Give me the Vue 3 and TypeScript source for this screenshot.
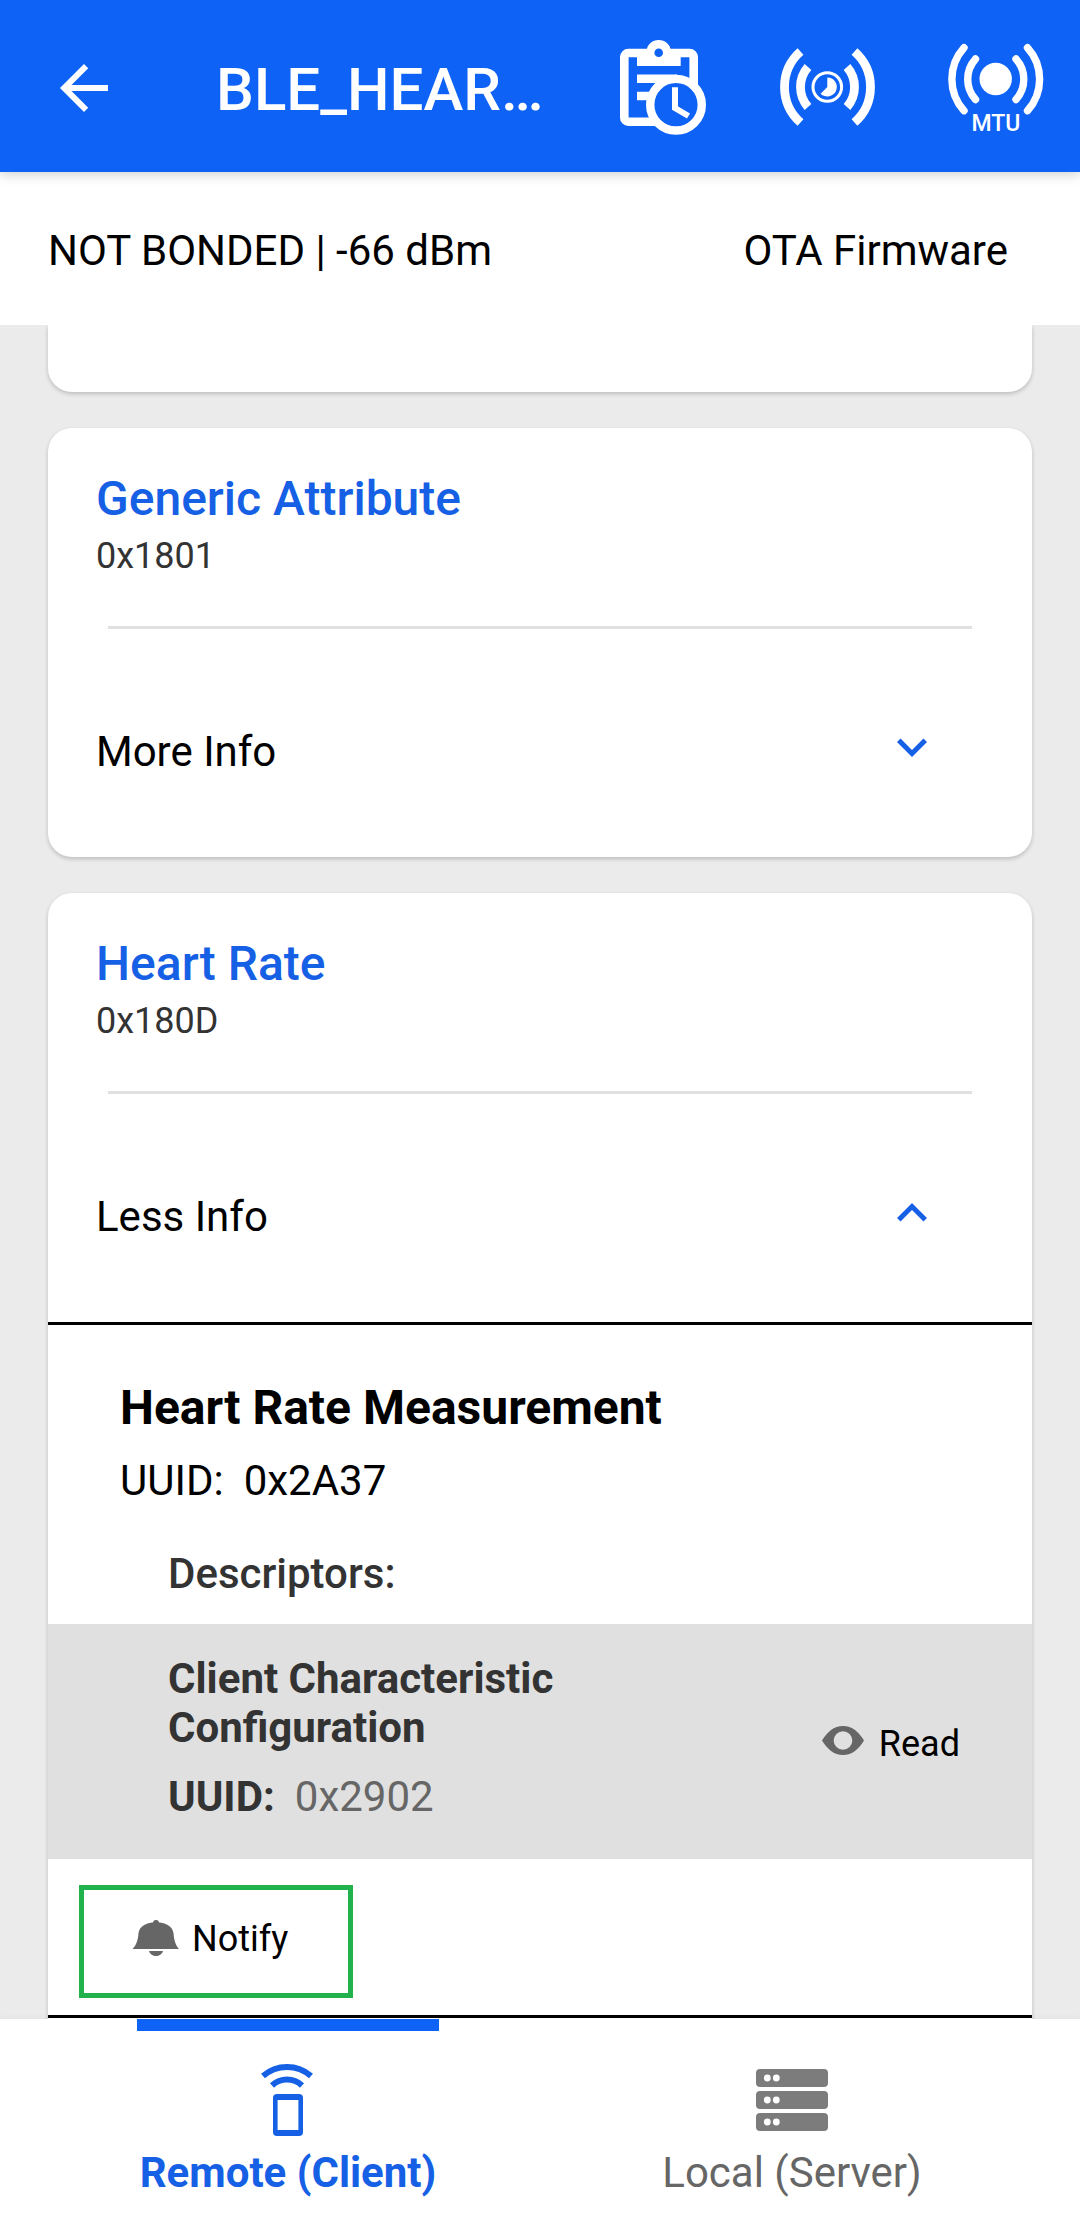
<script setup lang="ts">
import { ref } from 'vue'

interface Descriptor {
  name: string
  uuid: string
}

interface Characteristic {
  name: string
  uuid: string
  descriptors: Descriptor[]
}

interface Service {
  name: string
  uuid: string
  open: boolean
  characteristics: Characteristic[]
}

const services = ref<Service[]>([
  { name: 'Generic Attribute', uuid: '0x1801', open: false, characteristics: [] },
  {
    name: 'Heart Rate',
    uuid: '0x180D',
    open: true,
    characteristics: [
      {
        name: 'Heart Rate Measurement',
        uuid: '0x2A37',
        descriptors: [{ name: 'Client Characteristic Configuration', uuid: '0x2902' }],
      },
    ],
  },
])

const activeTab = ref<'remote' | 'local'>('remote')
const serverRows = [5, 27, 49]
</script>

<template>
  <div class="screen">
    <header class="app-bar">
      <button class="back" type="button" aria-label="Back">
        <svg viewBox="0 0 24 24" width="72" height="72" fill="currentColor">
          <path d="M20 11H7.83l5.59-5.59L12 4l-8 8 8 8 1.41-1.41L7.83 13H20z" />
        </svg>
      </button>
      <h1 class="title">BLE_HEAR…</h1>
      <button class="action" type="button" aria-label="Logs">
        <svg viewBox="0 0 96 96" width="96" height="96" fill="none" stroke="currentColor">
          <rect x="12.3" y="13" width="69.4" height="68.7" rx="4" stroke-width="8.6" />
          <path
            fill="currentColor"
            stroke="none"
            d="M34.7 11a12 11 0 0 1 24 0h10v15H25V11z"
          />
          <circle class="cutout" cx="46.7" cy="12.7" r="4.3" stroke="none" />
          <path d="M25 38.7h40M25 56h16" stroke-width="8.4" />
          <circle class="cutout" cx="64" cy="64.7" r="25.8" stroke-width="8.4" />
          <path d="M63 47.3V68l13.5 8" stroke-width="6" />
        </svg>
      </button>
      <button class="action" type="button" aria-label="Connection interval">
        <svg viewBox="0 0 96 96" width="96" height="96" fill="none" stroke="currentColor">
          <g stroke-width="8.8">
            <path d="M20.5 11.5a47.4 47.4 0 0 0 0 71M28 27a30.4 30.4 0 0 0 0 40" />
            <path d="M74.5 11.5a47.4 47.4 0 0 1 0 71M67 27a30.4 30.4 0 0 1 0 40" />
          </g>
          <circle cx="47.3" cy="47" r="14.3" stroke-width="3" />
          <path
            d="M47.3 37.5a9.5 9.5 0 1 1-6.7 16.2l6.7-6.7z"
            fill="currentColor"
            stroke="none"
          />
        </svg>
      </button>
      <button class="action" type="button" aria-label="MTU">
        <svg viewBox="0 0 96 96" width="96" height="96" fill="none" stroke="currentColor">
          <g stroke-width="7.4" stroke-linecap="round">
            <path d="M16 7.7a47 47 0 0 0 0 63M27.5 19a30.2 30.2 0 0 0 0 40.5" />
            <path d="M79.5 7.7a47 47 0 0 1 0 63M68 19a30.2 30.2 0 0 1 0 40.5" />
          </g>
          <circle cx="47.7" cy="39" r="16.2" fill="currentColor" stroke="none" />
          <text class="glyph-label" x="48" y="91" text-anchor="middle">MTU</text>
        </svg>
      </button>
    </header>

    <div class="status">
      <span>NOT BONDED | -66 dBm</span>
      <button class="ota" type="button">OTA Firmware</button>
    </div>

    <main class="list">
      <div class="card card-tail"></div>

      <section v-for="service in services" :key="service.uuid" class="card">
        <h2 class="service-name">{{ service.name }}</h2>
        <p class="service-uuid">{{ service.uuid }}</p>
        <hr class="rule" />
        <button
          class="toggle"
          type="button"
          :aria-expanded="service.open"
          @click="service.open = !service.open"
        >
          <span>{{ service.open ? 'Less Info' : 'More Info' }}</span>
          <svg class="chevron" viewBox="0 0 24 24" width="60" height="60" fill="currentColor">
            <path v-if="service.open" d="M7.41 15.81 12 11.23l4.59 4.58L18 14.4l-6-6-6 6z" />
            <path v-else d="M7.41 8.59 12 13.17l4.59-4.58L18 10l-6 6-6-6z" />
          </svg>
        </button>

        <template v-if="service.open">
          <article v-for="item in service.characteristics" :key="item.uuid" class="characteristic">
            <h3 class="char-name">{{ item.name }}</h3>
            <p class="char-uuid"><span>UUID:</span><span>{{ item.uuid }}</span></p>
            <h4 class="desc-heading">Descriptors:</h4>
            <div v-for="desc in item.descriptors" :key="desc.uuid" class="descriptor">
              <div class="desc-text">
                <p class="desc-name">{{ desc.name }}</p>
                <p class="desc-uuid"><strong>UUID:</strong><span>{{ desc.uuid }}</span></p>
              </div>
              <button class="read" type="button">
                <svg class="eye" viewBox="0 0 42 29" width="42" height="29" fill="currentColor">
                  <path
                    fill-rule="evenodd"
                    d="M0 14.5C5 6 12 0 21 0s16 6 21 14.5C37 23 30 29 21 29S5 23 0 14.5zM21 5.2a9.3 9.3 0 1 0 0 18.6 9.3 9.3 0 0 0 0-18.6z"
                  />
                </svg>
                <span>Read</span>
              </button>
            </div>
            <div class="properties">
              <button class="notify" type="button">
                <svg viewBox="0 0 48 36" width="48" height="36" fill="currentColor">
                  <circle cx="24" cy="3" r="3" />
                  <path
                    d="M.5 29C5 24.5 6 19 6.5 13 7.5 6.5 14 2.3 24 2.3S40.500 6.5 41.500 13c.5 6 1.500 11.500 5.500 16zM17 31h14c-1 3.500-4 5-7 5s-6-1.500-7-5z"
                  />
                </svg>
                <span>Notify</span>
              </button>
            </div>
          </article>
        </template>
      </section>
    </main>

    <nav class="tabs">
      <button
        type="button"
        :class="['tab', { active: activeTab === 'remote' }]"
        @click="activeTab = 'remote'"
      >
        <svg viewBox="0 0 72 72" width="72" height="72" fill="none" stroke="currentColor">
          <path d="M11 12a36.5 36.5 0 0 1 48 0M20 21.5a22 22 0 0 1 30 0" stroke-width="6" />
          <path
            fill="currentColor"
            stroke="none"
            fill-rule="evenodd"
            d="M25 30h22a4 4 0 0 1 4 4v34a4 4 0 0 1-4 4H25a4 4 0 0 1-4-4V34a4 4 0 0 1 4-4zM25.6 36v30h20.800V36z"
          />
        </svg>
        <span>Remote (Client)</span>
      </button>
      <button
        type="button"
        :class="['tab', { active: activeTab === 'local' }]"
        @click="activeTab = 'local'"
      >
        <svg viewBox="0 0 72 72" width="72" height="72">
          <g v-for="y in serverRows" :key="y">
            <rect x="0" :y="y" width="72" height="18" rx="4" fill="#7c7c7c" />
            <circle cx="11.3" :cy="y + 9" r="3.4" fill="#fff" />
            <circle cx="20.3" :cy="y + 9" r="3.4" fill="#fff" />
          </g>
        </svg>
        <span>Local (Server)</span>
      </button>
    </nav>
  </div>
</template>

<style>
body {
  margin: 0;
}
</style>

<style scoped>
.screen {
  display: flex;
  flex-direction: column;
  min-height: 100vh;
  background: #ebebeb;
  color: #000;
  font-family: Roboto, 'Noto Sans', sans-serif;
  font-size: 42px;
  line-height: 49px;
}

.screen * {
  box-sizing: border-box;
}

button {
  display: flex;
  align-items: center;
  margin: 0;
  padding: 0;
  border: 0;
  background: none;
  color: inherit;
  font: inherit;
  text-align: left;
  cursor: pointer;
}

svg {
  display: block;
  flex: none;
}

h1,
h2,
h3,
h4,
p {
  margin: 0;
  font-weight: 400;
}

.app-bar {
  position: relative;
  z-index: 1;
  display: flex;
  align-items: center;
  height: 172px;
  padding: 4px 0 0 48px;
  background: #0f62f6;
  color: #fff;
  box-shadow: 0 2px 12px rgba(0, 0, 0, 0.2);
}

.title {
  flex: 1;
  padding: 4px 0 0 96px;
  font-size: 60px;
  font-weight: 500;
  line-height: 70px;
  white-space: nowrap;
}

.action {
  justify-content: center;
  width: 168px;
  height: 168px;
}

.cutout {
  fill: #0f62f6;
}

.glyph-label {
  fill: currentColor;
  stroke: none;
  font-size: 23px;
  font-weight: 500;
}

.status {
  display: flex;
  justify-content: space-between;
  padding: 54px 72px 50px 48px;
  background: #fff;
}

.list {
  display: flex;
  flex: 1;
  flex-direction: column;
  gap: 36px;
  padding: 0 48px;
}

.card {
  border-radius: 24px;
  background: #fff;
  box-shadow: 0 2px 4px rgba(0, 0, 0, 0.2);
}

.card-tail {
  height: 67px;
  border-radius: 0 0 24px 24px;
  clip-path: inset(0 -8px -8px);
}

.card:last-child {
  flex: 1;
  border-radius: 24px 24px 0 0;
}

.service-name {
  padding: 43px 48px 0;
  color: #1560e4;
  font-size: 48px;
  font-weight: 500;
  line-height: 56px;
}

.service-uuid {
  padding: 8px 48px 0;
  color: #333;
  font-size: 36px;
  line-height: 42px;
}

.rule {
  height: 3px;
  margin: 49px 60px 0;
  border: 0;
  background: #e0e0e0;
}

.toggle {
  justify-content: space-between;
  width: 100%;
  height: 228px;
  padding: 16px 90px 0 48px;
}

.chevron {
  margin-bottom: 8px;
  color: #1560e4;
}

.characteristic {
  border-top: 3px solid #000;
  border-bottom: 3px solid #000;
}

.char-name {
  padding: 55px 72px 0;
  font-size: 48px;
  font-weight: 700;
  line-height: 56px;
}

.char-uuid {
  display: flex;
  gap: 20px;
  padding: 20px 72px 0;
}

.desc-heading {
  padding: 44px 120px 26px;
  color: #333;
  font-weight: 500;
}

.descriptor {
  display: flex;
  align-items: center;
  justify-content: space-between;
  padding: 30px 72px 38px 120px;
  background: #e0e0e0;
}

.desc-text {
  width: 440px;
  color: #333;
}

.desc-name,
.desc-uuid strong {
  font-weight: 700;
}

.desc-uuid {
  display: flex;
  gap: 20px;
  padding-top: 20px;
}

.desc-uuid span {
  color: #666;
}

.read {
  gap: 15px;
  padding-top: 12px;
  font-size: 36px;
  line-height: 42px;
}

.eye {
  margin-bottom: 6px;
  color: #666;
}

.properties {
  display: flex;
  padding: 26px 31px 17px;
}

.notify {
  gap: 12px;
  padding: 28px 60px 33px 48px;
  border: 5px solid #22b24c;
  font-size: 36px;
  line-height: 42px;
}

.notify svg {
  margin-bottom: 2px;
  color: #666;
}

.tabs {
  position: relative;
  display: flex;
  padding: 0 36px;
  background: #fff;
  box-shadow: 0 -1px 6px rgba(0, 0, 0, 0.04);
}

.tab {
  flex: 1;
  flex-direction: column;
  gap: 12px;
  padding-bottom: 43px;
  color: #666;
}

.tab::before {
  width: 60%;
  height: 12px;
  margin-bottom: 21px;
  content: '';
}

.tab.active {
  color: #1560e4;
  font-weight: 700;
}

.tab.active::before {
  background: #0f62f6;
}
</style>
